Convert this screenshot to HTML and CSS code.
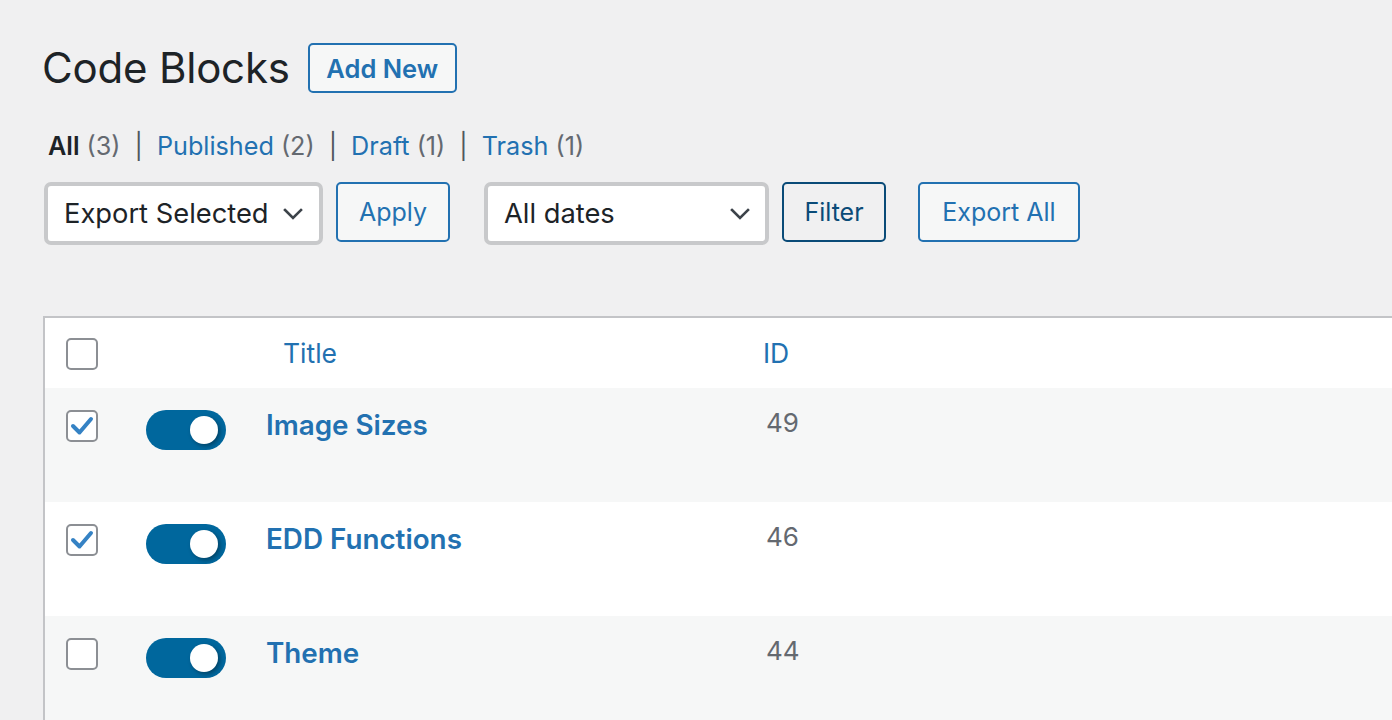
FILE: index.html
```html
<!DOCTYPE html>
<html lang="en">
<head>
<meta charset="utf-8">
<title>Code Blocks</title>
<link rel="stylesheet" href="styles.css">
</head>
<body>
<div class="wrap">
  <div class="page-head">
    <h1 class="page-title">Code Blocks</h1>
    <a class="btn btn-add" href="#">Add New</a>
  </div>

  <ul class="subsubsub">
    <li><a class="current" href="#">All</a> <span class="count">(3)</span></li>
    <li class="sep">|</li>
    <li><a href="#">Published</a> <span class="count">(2)</span></li>
    <li class="sep">|</li>
    <li><a href="#">Draft</a> <span class="count">(1)</span></li>
    <li class="sep">|</li>
    <li><a href="#">Trash</a> <span class="count">(1)</span></li>
  </ul>

  <div class="tablenav">
    <div class="select select-bulk">
      <span>Export Selected</span>
      <svg class="chev" width="20" height="12" viewBox="0 0 20 12"><path d="M2 2 L10 10 L18 2" fill="none" stroke="#3c434a" stroke-width="2.6" stroke-linecap="square"/></svg>
    </div>
    <button class="btn btn-apply">Apply</button>
    <div class="select select-dates">
      <span>All dates</span>
      <svg class="chev" width="20" height="12" viewBox="0 0 20 12"><path d="M2 2 L10 10 L18 2" fill="none" stroke="#3c434a" stroke-width="2.6" stroke-linecap="square"/></svg>
    </div>
    <button class="btn btn-filter">Filter</button>
    <button class="btn btn-export">Export All</button>
  </div>

  <div class="table">
    <div class="row head">
      <span class="cb"></span>
      <span class="cell-toggle"></span>
      <a class="col-title-head" href="#">Title</a>
      <a class="col-id-head" href="#">ID</a>
    </div>
    <div class="row alt">
      <span class="cb checked"><svg width="24" height="20" viewBox="0 0 24 20"><path d="M3 10 L9.5 16.5 L21 3" fill="none" stroke="#3582c4" stroke-width="4" stroke-linecap="round" stroke-linejoin="round"/></svg></span>
      <span class="cell-toggle"><span class="toggle"><span class="knob"></span></span></span>
      <a class="item-title" href="#">Image Sizes</a>
      <span class="item-id">49</span>
    </div>
    <div class="row">
      <span class="cb checked"><svg width="24" height="20" viewBox="0 0 24 20"><path d="M3 10 L9.5 16.5 L21 3" fill="none" stroke="#3582c4" stroke-width="4" stroke-linecap="round" stroke-linejoin="round"/></svg></span>
      <span class="cell-toggle"><span class="toggle"><span class="knob"></span></span></span>
      <a class="item-title" href="#">EDD Functions</a>
      <span class="item-id">46</span>
    </div>
    <div class="row alt">
      <span class="cb"></span>
      <span class="cell-toggle"><span class="toggle"><span class="knob"></span></span></span>
      <a class="item-title" href="#">Theme</a>
      <span class="item-id">44</span>
    </div>
  </div>
</div>
</body>
</html>
```

FILE: styles.css
```css
* { box-sizing: border-box; }
html, body { margin: 0; padding: 0; }
body {
  background: #f0f0f1;
  font-family: Inter, "Noto Sans", "Liberation Sans", sans-serif;
  color: #1d2327;
  overflow: hidden;
  height: 720px;
}
a { text-decoration: none; color: #2271b1; }

.wrap { padding: 43px 0 0 42px; }

.page-head {
  display: flex;
  align-items: center;
  gap: 18px;
  height: 50px;
}
.page-title {
  margin: 0;
  font-size: 42px;
  font-weight: 400;
  line-height: 50px;
  letter-spacing: -0.2px;
  color: #1d2327;
}

.btn {
  display: inline-flex;
  align-items: center;
  justify-content: center;
  font-family: inherit;
  border: 2px solid #2271b1;
  border-radius: 5px;
  background: #f6f7f7;
  color: #2271b1;
  font-size: 25px;
  padding: 0;
  cursor: pointer;
}
.btn-add {
  height: 50px;
  width: 149px;
  font-weight: 600;
  font-size: 25.5px;
}

.subsubsub {
  list-style: none;
  margin: 38px 0 0 6px;
  padding: 0;
  display: flex;
  gap: 14px;
  font-size: 25.2px;
  line-height: 30px;
  height: 30px;
}
.subsubsub .current { color: #1d2327; font-weight: 600; }
.subsubsub .count { color: #646970; }
.subsubsub .sep { color: #50575e; }

.tablenav {
  margin-top: 21px;
  display: flex;
  align-items: flex-start;
  height: 63px;
}
.select {
  height: 63px;
  background: #fff;
  border: 4px solid #c8c9cb;
  border-radius: 7px;
  display: flex;
  align-items: center;
  justify-content: space-between;
  padding: 0 16px 0 16px;
  font-size: 27.3px;
  color: #1d2327;
  margin-left: 2px;
}
.select-bulk { width: 279px; }
.select-dates { width: 285px; margin-left: 34px; padding-right: 15px; }
.chev { display: block; }

.tablenav .btn { height: 60px; }
.btn-apply { width: 114px; margin-left: 13px; }
.btn-filter {
  width: 104px;
  margin-left: 13px;
  border-color: #0a4b78;
  color: #0a4b78;
  background: #f0f0f1;
}
.btn-export { width: 162px; margin-left: 32px; }

.table {
  margin-top: 71px;
  margin-left: 1px;
  border-top: 2px solid #c3c4c7;
  border-left: 2px solid #c3c4c7;
  background: #fff;
}
.row {
  display: grid;
  grid-template-columns: 80px 120px 497px 1fr;
  align-items: start;
  padding: 22px 0 0 21px;
  height: 114px;
  background: #fff;
}
.row.alt { background: #f6f7f7; }
.row.head { height: 70px; align-items: center; padding-top: 0; }

.cb {
  width: 32px;
  height: 32px;
  border: 2px solid #8c8f94;
  border-radius: 5px;
  background: #fff;
  display: flex;
  align-items: center;
  justify-content: center;
}
.row.head .cb { margin-top: 2px; }

.col-title-head { padding-left: 17px; font-size: 26.5px; line-height: 30px; }
.col-id-head { font-size: 26.5px; line-height: 30px; }

.toggle {
  display: block;
  position: relative;
  width: 80px;
  height: 40px;
  border-radius: 20px;
  background: #00679d;
}
.knob {
  position: absolute;
  top: 6px;
  right: 8px;
  width: 28px;
  height: 28px;
  border-radius: 50%;
  background: #fff;
  box-shadow: 2px 2px 4px rgba(0, 0, 0, 0.35);
}

.item-title {
  font-size: 27.8px;
  font-weight: 600;
  line-height: 30px;
  color: #2271b1;
}
.item-id {
  padding-left: 3px;
  font-size: 26px;
  line-height: 26px;
  color: #646970;
}
```
